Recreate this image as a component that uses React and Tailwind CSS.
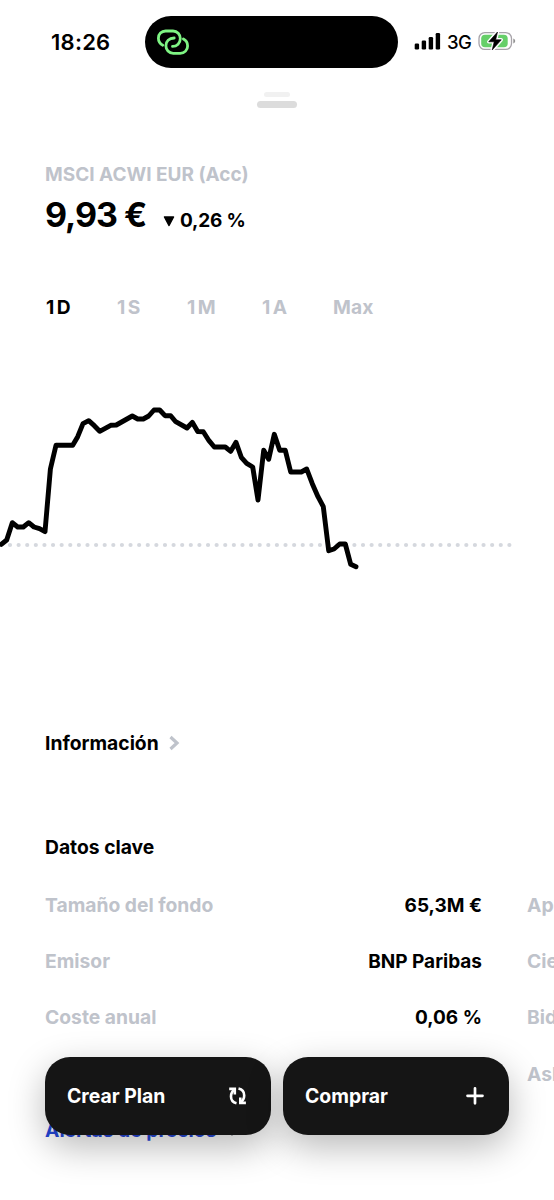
import React from 'react';

const RANGES = [
  { id: '1D', width: 'w-[71px]', tracking: 'tracking-[2.4px]' },
  { id: '1S', width: 'w-[70px]', tracking: 'tracking-[2.4px]' },
  { id: '1M', width: 'w-[75px]', tracking: 'tracking-[2.4px]' },
  { id: '1A', width: 'w-[71px]', tracking: 'tracking-[2.4px]' },
  { id: 'Max', width: 'w-[60px]', tracking: 'tracking-[0.1px]' },
];

const KEY_DATA = [
  { label: 'Tamaño del fondo', value: '65,3M €', next: 'Apertura' },
  { label: 'Emisor', value: 'BNP Paribas', next: 'Cierre' },
  { label: 'Coste anual', value: '0,06 %', next: 'Bid' },
  { label: '', value: '', next: 'Ask' },
];

const PRICES = [
  [1.3, 544.3], [6.7, 540], [12.3, 522.7], [17.7, 527], [23.3, 527], [28.7, 522.7], [34, 527],
  [39.5, 528.7], [45, 531.7], [50.4, 469], [56, 445.3], [72.7, 445.3], [77.7, 436.7], [83, 423.7],
  [88.7, 420.7], [94.3, 425.7], [99.7, 431.3], [110.7, 425.3], [116.3, 425], [132.3, 416],
  [137.7, 419], [143.3, 419], [148.7, 416], [154, 410], [159.7, 410], [165, 415.7], [170.7, 415.7],
  [175.7, 421.7], [187, 428], [192.3, 422.3], [197.7, 431.5], [203.3, 431.7], [209, 440.7],
  [214.3, 447], [225.3, 447], [230.7, 451.3], [236, 442.3], [241.3, 457.3], [246.7, 463.3],
  [252.7, 467], [258, 500], [263.7, 450.3], [268.7, 459.3], [274.3, 434.3], [279.7, 450.3],
  [285.3, 450.3], [290.7, 472], [301.3, 472], [306.7, 469], [312.3, 483.7], [318, 496.7],
  [323.3, 506.7], [328.7, 550.7], [334, 549], [339.7, 544], [345.3, 544], [350.7, 564.3], [356, 566.7],
];

const StatusBar = () => (
  <div className="flex h-[84px] items-center">
    <div className="w-[145px] pl-[51px] text-[22px] font-semibold leading-none tracking-[0.25px]">18:26</div>
    <div className="flex h-[52px] w-[253px] items-center rounded-full bg-black pl-[11px]">
      <svg width="34" height="28" viewBox="0 0 34 28" fill="none" stroke="#7ff584" strokeWidth="2.8" strokeLinecap="round">
        <path d="M6.8 17.2C3.8 15.6 2.4 13 2.4 10.2C2.4 6.2 5.4 3 9.6 3H17C21.3 3 24.3 6.5 24.3 10.6C24.3 15 21 18.4 16.5 18.4" />
        <path d="M27.4 11C30.1 12.4 31.6 15 31.6 17.9C31.6 22 28.6 25.3 24.2 25.3H17.2C12.9 25.3 9.9 21.8 9.9 17.8C9.9 13.4 13 10.2 18.2 10" />
      </svg>
    </div>
    <div className="flex items-center pl-[16px]">
      <svg className="-mt-[2px]" width="27" height="17" viewBox="0 0 27 17" fill="#000">
        <rect x="0.7" y="10.5" width="4.4" height="6" rx="1.3" />
        <rect x="7.7" y="7.5" width="4.4" height="9" rx="1.3" />
        <rect x="14.7" y="4" width="4.4" height="12.5" rx="1.3" />
        <rect x="21.7" y="0" width="4.4" height="16.5" rx="1.3" />
      </svg>
      <span className="ml-[6px] w-[26px] text-[18.5px] font-medium leading-none tracking-[-0.6px]">3G</span>
      <svg className="-mt-[2px] ml-[5px]" width="38" height="22" viewBox="0 0 38 22">
        <rect x="1" y="2.6" width="32.5" height="16.8" rx="5.8" fill="none" stroke="#a7a3a9" strokeWidth="1.3" />
        <path d="M35.3 8.5V13.5C36.5 13 37.2 12.1 37.2 11S36.5 9 35.3 8.5Z" fill="#929292" />
        <rect x="3.2" y="4.8" width="26.5" height="12.4" rx="3.8" fill="#66cf69" />
        <path d="M19.5 2L10.7 11.8H16.2L14.2 20L23.3 9.8H17.7Z" fill="#000" stroke="#fff" strokeWidth="3.4" strokeLinejoin="round" />
        <path d="M19.5 2L10.7 11.8H16.2L14.2 20L23.3 9.8H17.7Z" fill="#000" stroke="#000" strokeWidth="0.6" strokeLinejoin="round" />
      </svg>
    </div>
  </div>
);

const Chart = () => (
  <svg className="block" width="554" height="200" viewBox="0 390 554 200" fill="none">
    <path d="M10 545H511" stroke="#d5d8de" strokeWidth="4.2" strokeLinecap="round" strokeDasharray="0 8.61" />
    <polyline
      points={PRICES.map((p) => p.join(',')).join(' ')}
      stroke="#000"
      strokeWidth="4.9"
      strokeLinecap="round"
      strokeLinejoin="round"
    />
  </svg>
);

const ActionButton = ({ label, children }) => (
  <button className="flex h-[78px] w-[226px] items-center justify-between rounded-[25px] bg-[#151515] pl-[22px] pr-[22px] text-[19.4px] font-bold text-white shadow-[0_12px_36px_rgba(0,0,0,0.28)]">
    <span className="pt-[2px]">{label}</span>
    {children}
  </button>
);

export default function App() {
  return (
    <div className="relative h-[1200px] w-[554px] overflow-hidden bg-white font-['Inter','Liberation_Sans',sans-serif] text-black">
      <StatusBar />

      <div className="flex h-[75px] flex-col items-center pt-[8px]">
        <div className="h-[5px] w-[26px] rounded-full bg-[#f1f1f1]" />
        <div className="mt-[4px] h-[7px] w-[40px] rounded-full bg-[#dcdcdc]" />
      </div>

      <header className="h-[133px] pl-[45px]">
        <p className="h-[30px] text-[19px] font-bold leading-[32px] text-[#bfc3cb]">MSCI ACWI EUR (Acc)</p>
        <div className="flex h-[52px] items-baseline">
          <span className="w-[118px] text-[34px] font-bold leading-[51px] tracking-[-1px]">9,93 €</span>
          <svg width="12" height="11" viewBox="0 0 12 11" className="mr-[5px]">
            <path d="M1.5 1H10.5L6 9.5Z" fill="#000" stroke="#000" strokeWidth="1.5" strokeLinejoin="round" />
          </svg>
          <span className="text-[19px] font-bold tracking-[-0.2px]">0,26 %</span>
        </div>
      </header>

      <nav className="flex h-[98px] pl-[46px] text-[19.2px] font-bold leading-[30px]">
        {RANGES.map((range) => (
          <span
            key={range.id}
            className={`${range.width} ${range.tracking} ${range.id === '1D' ? 'text-black' : 'text-[#bfc3cb]'}`}
          >
            {range.id}
          </span>
        ))}
      </nav>

      <Chart />

      <section className="pl-[45px] pt-[138px] text-[19.3px] font-bold leading-[30px]">
        <div className="flex items-center">
          <h2>Información</h2>
          <svg className="ml-[10px]" width="12" height="16" viewBox="0 0 12 16" fill="none" stroke="#bfc3cb" strokeWidth="3.2">
            <path d="M1.5 2L8 8L1.5 14" />
          </svg>
        </div>
      </section>

      <section className="pl-[45px] pt-[74px] text-[19.3px] font-bold">
        <h2 className="h-[45px] leading-[30px]">Datos clave</h2>
        {KEY_DATA.map((row) => (
          <div key={row.next} className="flex h-[56.3px] items-center whitespace-nowrap text-[#bfc3cb]">
            <span className="w-[200px] shrink-0">{row.label}</span>
            <span className="w-[237px] shrink-0 pt-[2px] text-right text-[19px] text-black">{row.value}</span>
            <span className="ml-[45px] shrink-0">{row.next}</span>
          </div>
        ))}
        <a className="mt-[13px] flex items-center leading-[30px] text-[#2547d8]">
          Alertas de precios
          <svg className="ml-[13px]" width="12" height="16" viewBox="0 0 12 16" fill="none" stroke="#8b8d93" strokeWidth="2.8">
            <path d="M2 1L8.7 7L2 13" />
          </svg>
        </a>
      </section>

      {/* Floating actions */}
      <div className="absolute left-[45px] top-[1057px] flex gap-[12px]">
        <ActionButton label="Crear Plan">
          <svg width="22" height="20" viewBox="0 0 22 20" fill="none" stroke="#fff" strokeWidth="2.6">
            <path d="M9.5 17.2C6.2 16.4 4 13.6 4 10.4C4 7.6 5.4 5 7.8 3.4" />
            <path d="M2.2 2.9H7.8V8.4" />
            <path d="M11.5 2.5C14.9 3.3 17.2 6.1 17.2 9.4C17.2 12.3 15.7 14.8 13.4 16.4" />
            <path d="M18.9 16.9H13.3V11.4" />
          </svg>
        </ActionButton>
        <ActionButton label="Comprar">
          <svg width="22" height="20" viewBox="0 0 22 20" fill="none" stroke="#fff" strokeWidth="2.7">
            <path d="M2.5 9.8H17.5M10 2.3V17.3" strokeLinecap="round" />
          </svg>
        </ActionButton>
      </div>
    </div>
  );
}
